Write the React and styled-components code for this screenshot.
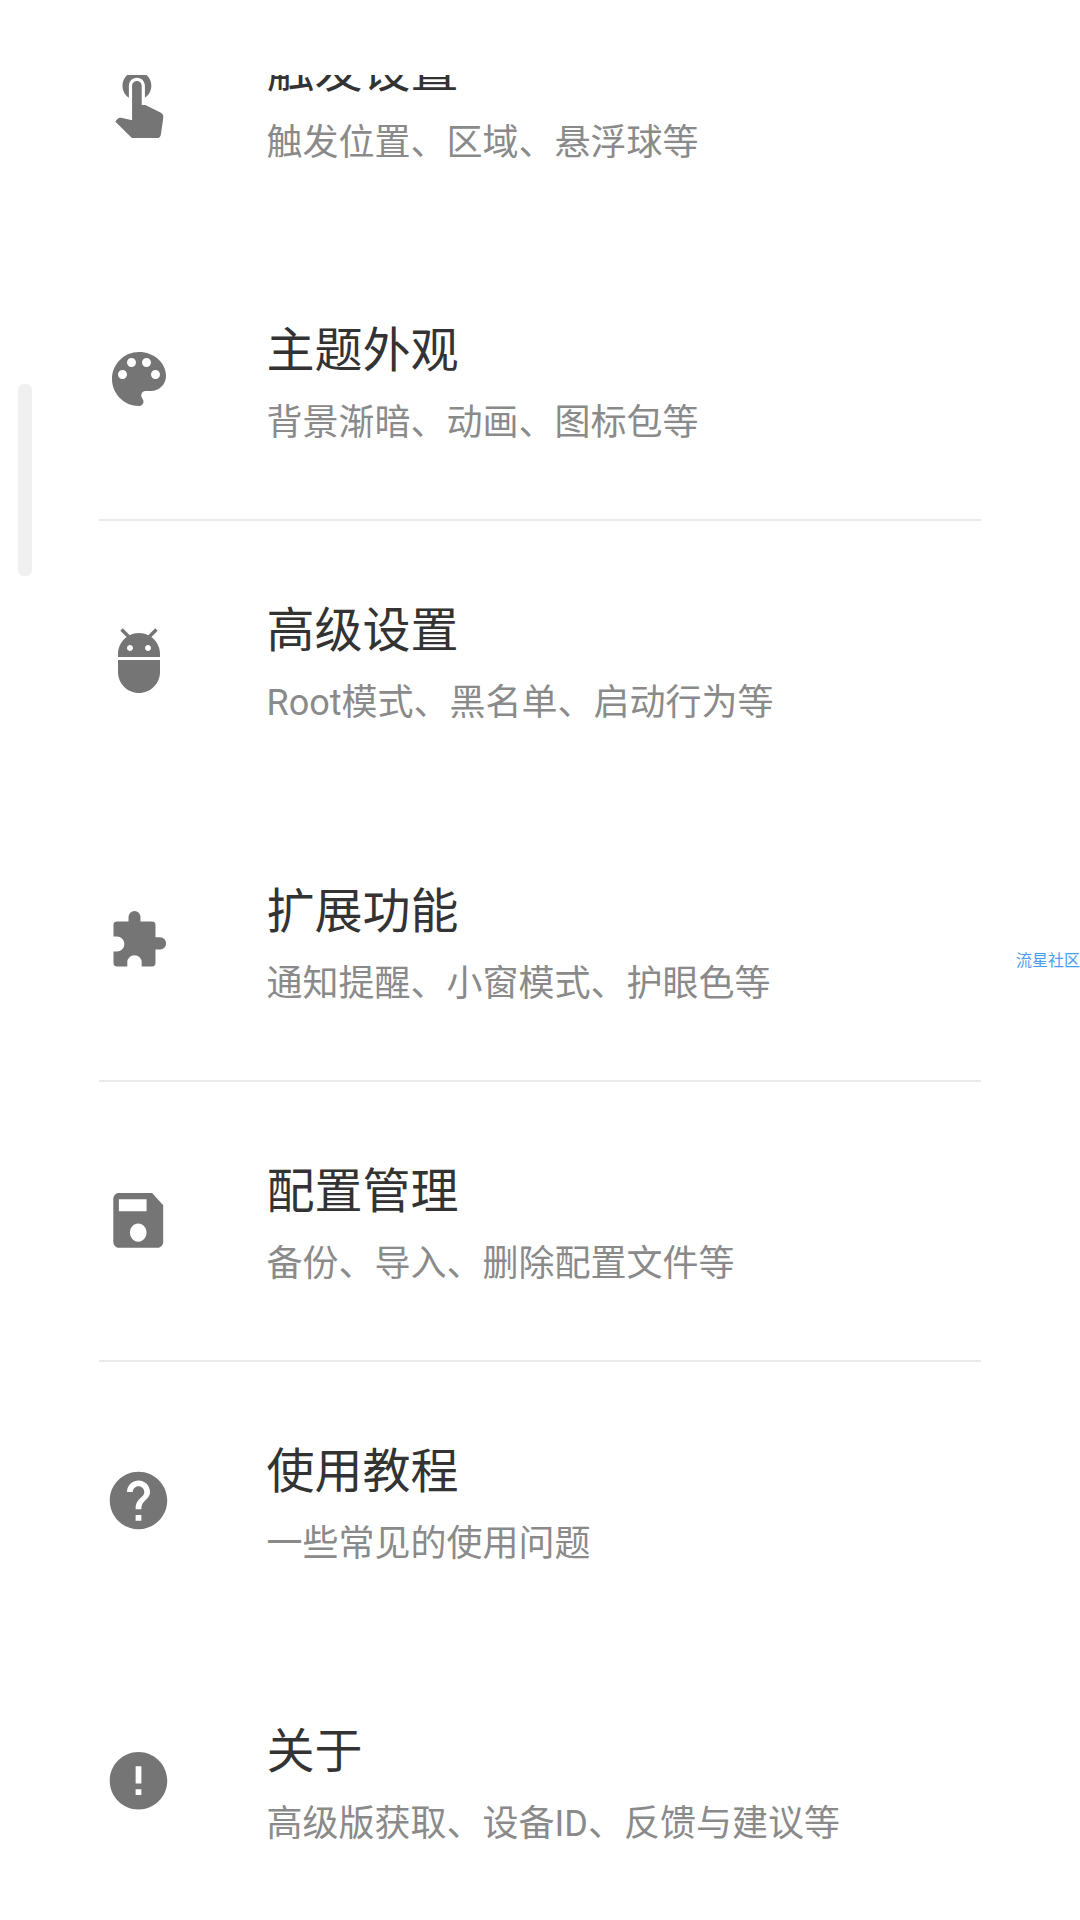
import React from 'react'
import styled, { createGlobalStyle } from 'styled-components'

const GlobalStyle = createGlobalStyle`
    html, body {
        margin: 0;
        padding: 0;
        background: #ffffff;
    }
    body {
        font-family: Roboto, "Noto Sans CJK SC", sans-serif;
    }
`
const Page = styled.div`
    position: relative;
    width: 1080px;
    height: 1920px;
    padding-top: 75px;
    box-sizing: border-box;
    overflow: hidden;
    background: #ffffff;
`
const List = styled.div`
    height: 1845px;
    overflow: hidden;
`
const Rows = styled.div`
    margin-top: -114.5px;
`
const Row = styled.div`
    height: 280.25px;
    margin: 0 99px;
    box-sizing: border-box;
    display: flex;
    align-items: center;
    border-bottom: 2px solid ${props => (props.$divider ? '#e9e9e9' : 'transparent')};
`
const IconSlot = styled.div`
    width: 69px;
    height: 69px;
    margin-left: 5px;
    flex: none;
    display: flex;
    align-items: center;
    justify-content: center;
`
const IconBox = styled.svg`
    width: ${props => props.$w}px;
    height: ${props => props.$h}px;
    flex: none;
    fill: #757575;
`
const TextBox = styled.div`
    margin-left: 93.5px;
    margin-top: 6.5px;
    display: flex;
    flex-direction: column;
`
const Title = styled.div`
    font-size: 48px;
    line-height: 64px;
    color: #333333;
`
const Subtitle = styled.div`
    margin-top: 16px;
    font-size: 36px;
    line-height: 48px;
    color: #8a8a8a;
`
const ScrollThumb = styled.div`
    position: absolute;
    left: 18px;
    top: 384px;
    width: 14px;
    height: 192px;
    border-radius: 6px;
    background: #f0f0f0;
`
const Watermark = styled.div`
    position: absolute;
    right: 0;
    top: 951px;
    font-size: 16px;
    line-height: 20px;
    color: #4a9df0;
`

const items = [
    {
        title: '触发设置',
        sub: '触发位置、区域、悬浮球等',
        w: 77,
        h: 77,
        box: '0 -0.2 24 24',
        icon: 'M9 11.24V7.5C9 6.12 10.12 5 11.5 5S14 6.12 14 7.5v3.74c1.21-.81 2-2.18 2-3.74C16 5.01 13.99 3 11.5 3S7 5.01 7 7.5c0 1.56.79 2.93 2 3.74zm9.84 4.63l-4.54-2.26c-.17-.07-.35-.11-.54-.11H13v-6c0-.83-.67-1.5-1.5-1.5S10 6.67 10 7.5v10.74l-3.43-.72c-.08-.01-.15-.03-.24-.03-.31 0-.59.13-.79.33l-.79.8 4.94 4.94c.27.27.65.44 1.06.44h6.79c.75 0 1.33-.55 1.44-1.28l.75-5.27c.01-.07.02-.14.02-.2 0-.62-.38-1.16-.91-1.38z',
    },
    {
        title: '主题外观',
        sub: '背景渐暗、动画、图标包等',
        divider: true,
        w: 72,
        h: 72,
        box: '0 0.3 24 24',
        icon: 'M12 3c-4.97 0-9 4.03-9 9s4.03 9 9 9c.83 0 1.5-.67 1.5-1.5 0-.39-.15-.74-.39-1.01-.23-.26-.38-.61-.38-.99 0-.83.67-1.5 1.5-1.5H16c2.76 0 5-2.24 5-5 0-4.42-4.03-8-9-8zm-5.5 9c-.83 0-1.5-.67-1.5-1.5S5.67 9 6.5 9 8 9.67 8 10.5 7.33 12 6.5 12zm3-4C8.67 8 8 7.33 8 6.5S8.67 5 9.5 5s1.5.67 1.5 1.5S10.33 8 9.5 8zm5 0c-.83 0-1.5-.67-1.5-1.5S13.67 5 14.5 5s1.5.67 1.5 1.5S15.33 8 14.5 8zm3 4c-.83 0-1.5-.67-1.5-1.5S16.67 9 17.5 9s1.5.67 1.5 1.5-.67 1.5-1.5 1.5z',
    },
    {
        title: '高级设置',
        sub: 'Root模式、黑名单、启动行为等',
        w: 72,
        h: 72,
        icon: 'M5 16c0 3.87 3.13 7 7 7s7-3.13 7-7v-4H5v4zM16.12 4.37l2.1-2.1-.82-.83-2.3 2.31C14.16 3.28 13.12 3 12 3s-2.16.28-3.09.75L6.6 1.44l-.82.83 2.1 2.1C6.14 5.64 5 7.68 5 10v1h14v-1c0-2.32-1.14-4.36-2.88-5.63zM9 9c-.55 0-1-.45-1-1s.45-1 1-1 1 .45 1 1-.45 1-1 1zm6 0c-.55 0-1-.45-1-1s.45-1 1-1 1 .45 1 1-.45 1-1 1z',
    },
    {
        title: '扩展功能',
        sub: '通知提醒、小窗模式、护眼色等',
        divider: true,
        w: 69,
        h: 69,
        box: '0 0.4 24 24',
        icon: 'M4.5 5.75H8.53V4.25a2.08 2.08 0 0 1 4.16 0V5.75H16.7a1.2 1.2 0 0 1 1.2 1.2V11.3H19.5a2.1 2.1 0 0 1 0 4.2H17.9V20.2a1.2 1.2 0 0 1-1.2 1.2H13.1V20a2.5 2.5 0 0 0-5 0V21.4H4.5a1.2 1.2 0 0 1-1.2-1.2V16.2H4.5a2.6 2.6 0 0 0 0-5.2H3.3V6.95A1.2 1.2 0 0 1 4.5 5.75z',
    },
    {
        title: '配置管理',
        sub: '备份、导入、删除配置文件等',
        divider: true,
        w: 66.5,
        h: 72.8,
        icon: 'M17 3H5c-1.11 0-2 .9-2 2v14c0 1.1.89 2 2 2h14c1.1 0 2-.9 2-2V7l-4-4zm-5 16c-1.66 0-3-1.34-3-3s1.34-3 3-3 3 1.34 3 3-1.34 3-3 3zm3-10H5V5h10v4z',
    },
    {
        title: '使用教程',
        sub: '一些常见的使用问题',
        w: 69,
        h: 69,
        icon: 'M12 2C6.48 2 2 6.48 2 12s4.48 10 10 10 10-4.48 10-10S17.52 2 12 2zm1 17h-2v-2h2v2zm2.07-7.75l-.9.92C13.45 12.9 13 13.5 13 15h-2v-.5c0-1.1.45-2.1 1.17-2.83l1.24-1.26c.37-.36.59-.86.59-1.41 0-1.1-.9-2-2-2s-2 .9-2 2H8c0-2.21 1.79-4 4-4s4 1.79 4 4c0 .88-.36 1.68-.93 2.25z',
    },
    {
        title: '关于',
        sub: '高级版获取、设备ID、反馈与建议等',
        w: 69,
        h: 69,
        box: '0 0.3 24 24',
        icon: 'M12 2C6.48 2 2 6.48 2 12s4.48 10 10 10 10-4.48 10-10S17.52 2 12 2zm1 15h-2v-2h2v2zm0-4h-2V7h2v6z',
    },
]

const App = () => (
    <Page>
        <GlobalStyle />
        <List>
            <Rows>
                {items.map(item => (
                    <Row key={item.title} $divider={item.divider}>
                        <IconSlot>
                            <IconBox
                                $w={item.w}
                                $h={item.h}
                                viewBox={item.box || '0 0 24 24'}
                                preserveAspectRatio="none"
                            >
                                <path d={item.icon} />
                            </IconBox>
                        </IconSlot>
                        <TextBox>
                            <Title>{item.title}</Title>
                            <Subtitle>{item.sub}</Subtitle>
                        </TextBox>
                    </Row>
                ))}
            </Rows>
        </List>
        <ScrollThumb />
        <Watermark>流星社区</Watermark>
    </Page>
)

export default App
